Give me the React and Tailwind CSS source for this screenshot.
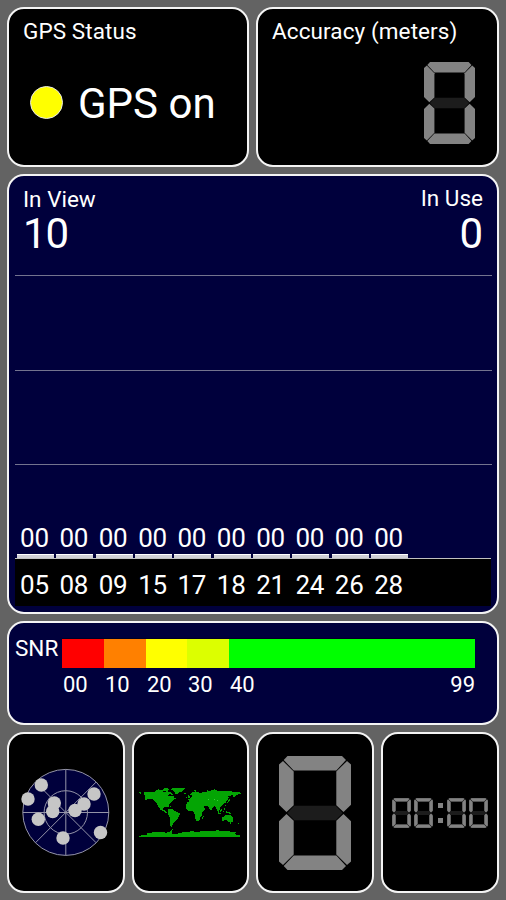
import React from 'react'
import clsx from 'clsx'

const satellites = ['05', '08', '09', '15', '17', '18', '21', '24', '26', '28']

const snrSteps = [
    { label: '00', color: 'bg-[#ff0000]', width: 'w-[42px]' },
    { label: '10', color: 'bg-[#ff8000]', width: 'w-[42px]' },
    { label: '20', color: 'bg-[#ffff00]', width: 'w-[41px]' },
    { label: '30', color: 'bg-[#dcff00]', width: 'w-[42px]' },
]

const radarDots = [
    [37.3, 55], [24, 69], [50.3, 73], [48.7, 81.5], [34.3, 89.3],
    [59, 108], [71, 80.5], [80, 74], [90, 64], [96.5, 102.5],
]

const Card = ({ className, children }) => (
    <div className={clsx('rounded-[17px] border-2 border-[#f4f4f4] overflow-hidden', className)}>
        {children}
    </div>
)

// Seven segment digit showing a dimmed zero
const Digit = ({ className }) => (
    <svg viewBox="0 0 72 114" preserveAspectRatio="none" className={className}>
        <g fill="#838383">
            <polygon points="8.5,0 63,0 67,4 57.3,14.5 14.7,14.5 4.7,4" />
            <polygon points="4,5 14.7,15.6 14.7,49.3 7.5,56 0,48.7 0,8.5" />
            <polygon points="68,5 57.3,15.6 57.3,49.3 64.5,56 72,48.7 72,8.5" />
            <polygon points="4,109 14.7,98.4 14.7,64.7 7.5,58 0,65.3 0,105.5" />
            <polygon points="68,109 57.3,98.4 57.3,64.7 64.5,58 72,65.3 72,105.5" />
            <polygon points="8.5,114 63,114 67,110 57.3,99.5 14.7,99.5 4.7,110" />
        </g>
        <polygon fill="#1c1c1c" points="8.3,57 15.3,49.7 56.7,49.7 63.7,57 56.7,64.3 15.3,64.3" />
    </svg>
)

const Radar = () => (
    <svg viewBox="2 4 114 157" className="w-[114px] h-[157px]">
        <g fill="none" stroke="#9494a8" strokeWidth="1">
            <circle cx="58.8" cy="82.4" r="43" fill="#00003c" />
            <circle cx="58.8" cy="82.4" r="21.7" />
            <path d="M15.8 82.5H102M58.8 39.4V125.4M28.4 52L89.2 112.8M89.2 52L28.4 112.8" />
        </g>
        <g fill="#c6c6c6">
            {radarDots.map(([x, y]) => (
                <circle key={`${x}-${y}`} cx={x - 3} cy={y} r="6.7" />
            ))}
        </g>
    </svg>
)

const WorldMap = () => (
    <svg viewBox="27 36 306 154" className="w-[102px] h-[51px]" fill="#04a504" shapeRendering="crispEdges">
        {/* North America */}
        <path d="M27 52l8 1-4 4zM40 52l12-2 22 2 14-2 14 3 6-4 8 6 4 2-6 5 8 2 6-2 5 6 5 3-9 5-7 6-5 8-2 8-6-3-9 3-2 5 5 3 4 4 7 5-3 1-9-5-12-7-8-12-4-10-7-7-10-4-12 3-8 3 4-7z" />
        <path d="M75 47l10-4 10 2 5 4-12 3-12-1zM98 43l12-2 8 2-8 5-10 1zM108 48l8 2 8 4 6 6-8-1-8-5-8-2zM101 40l15-1-8 4z" />
        {/* Greenland and Iceland */}
        <path d="M118 42l20-4 20 0 7 3-5 6-8 4-7 2-4 6-6-4-4-8-7-2zM161 55l6-1-1 4-5 0z" />
        {/* South America */}
        <path d="M109 92l10 1 7 3-10-2zM113 103l7-2 10 3 5 5 8 4 7 4-3 7-4 7-5 6-6 6-3 5-4 6 1 5-5-4-2-10 2-10-2-8-6-8-1-7 2-5z" />
        {/* Europe and Asia */}
        <path d="M178 79l-3-3 0-5 6 1 2-5 5-3-1-4-7 0 6-7 12-4 9 4 9 0 5-3 8 1 14-4 12-3 8 4 20 1 14 0 16 1 22 3-1 4-11 2-9 6-5 1 2-6-8 2-8 2 2 4-4 8-6 2 1 6-4 0-6 7-5 4-4 4 2 6-5 4-5-3-3-9-5-3-5 4-4 8-3 0-6-11-7-2-5 0-2 5-6 5-6-4-6-10-9 0-4-4-8 1-3-2-7-1z" />
        <path d="M174 60l5 3 1 5-6 0 1-4zM168 66l4-2 0 4-4 1zM190 45l9-1-2 3-6 0zM229 47l6-2-2 5zM249 42l8 0-3 3z" />
        {/* Japan */}
        <path d="M297 74l5-3-1 7-5 5-7 2 5-5zM298 66l3-2 0 5zM286 90l2 1-1 4z" />
        {/* Africa */}
        <path d="M170 84l16-2 7 2 8-1 10 2 5 9 5 6 5 0-3 6-6 8 0 8-5 5-2 6-6 6-5-2-4-10-1-8-4-9-7-1-8-1-6-6 0-9zM219 124l3-1-2 8-4 2z" />
        {/* Southeast Asia and Oceania */}
        <path d="M261 103l4 3 4 7-3 0zM270 106l6-4 1 6-5 4-3-3zM281 96l3 2 3 7-3-1zM266 115l12 2-1 2-11-1zM278 108l4 1-2 6zM288 109l12 4 6 5-9-2-8-3z" />
        <path d="M277 128l8-5 6-3 6 0 4 3 3-4 3 7 4 5-1 8-6 5-6-2-5-5-9 0-7 2zM301 145l4 0-2 3zM326 144l5-3-4 5-6 4z" />
        {/* Antarctica */}
        <path d="M27 183l22-3 2-5 18-2 22-1 18 2 10-3 3-5 6-2-3 6 0 6 6 3 8-1 14-4 16-3 16-1 22 1 12-3 14 1 12-1 20-1 18 2 15 1 20 2-1 7 13 2v5H27z" />
        <path fill="#35d535" d="M235 72h2v3h-2zM252 72h2v3h-2zM262 75h2v3h-2zM276 75h2v3h-2z" />
    </svg>
)

const clockDigit = 'w-[19px] h-[30px] [&_g]:stroke-black [&_g]:stroke-[1px]'

const App = () => {
    return (
        <div className="w-[506px] h-[900px] bg-[#636363] pt-[7px] pl-[7px] flex flex-col gap-[7px] text-white font-['Roboto','Liberation_Sans',sans-serif]">
            <div className="flex gap-[7px] h-[160px]">
                <Card className="w-[242px] bg-black pl-[14px] pt-[9px]">
                    <div className="text-[22.5px] leading-[27px] tracking-[0.1px]">GPS Status</div>
                    <div className="flex items-center mt-[34px] pl-[7px]">
                        <div className="w-[33px] h-[33px] mb-[4px] rounded-full bg-[#ffff00] border border-[#e8e8e8]" />
                        <div className="ml-[15px] text-[42px] leading-[50px]">GPS on</div>
                    </div>
                </Card>
                <Card className="w-[243px] bg-black pl-[14px] pt-[9px]">
                    <div className="text-[22.5px] leading-[27px] tracking-[0.1px]">Accuracy (meters)</div>
                    <Digit className="w-[51px] h-[82px] mt-[17px] ml-[152px]" />
                </Card>
            </div>

            <Card className="w-[492px] h-[440px] bg-[#00003c] pl-[6px] pr-[5px]">
                <div className="flex justify-between h-[99px] pl-[8px] pr-[9px] pt-[9px]">
                    <div>
                        <div className="text-[22.5px] leading-[28px]">In View</div>
                        <div className="text-[42px] leading-[42px] tracking-[-1px]">10</div>
                    </div>
                    <div className="text-right">
                        <div className="text-[22.5px] leading-[26px]">In Use</div>
                        <div className="text-[42px] leading-[46px]">0</div>
                    </div>
                </div>
                <div className="h-[95px] border-t border-[#73738f]" />
                <div className="h-[94px] border-t border-[#73738f]" />
                <div className="h-[94px] border-t border-[#73738f] flex items-end pl-[2px]">
                    {satellites.map((id) => (
                        <div key={id} className="w-[39.35px] shrink-0 pr-[2.5px]">
                            <div className="text-[26px] leading-[32px] tracking-[-0.3px] text-center pr-[2px]">00</div>
                            <div className="h-[4px] bg-[#d0d0d6] border-t border-white" />
                        </div>
                    ))}
                </div>
                <div className="h-[48px] mr-px bg-black border-t border-[#c0c0c0] flex pl-[2px] pt-[9px]">
                    {satellites.map((id) => (
                        <div key={id} className="w-[39.35px] shrink-0 pr-[4.5px] text-[26px] leading-[34px] tracking-[-0.3px] text-center">{id}</div>
                    ))}
                </div>
            </Card>

            <Card className="w-[492px] h-[104px] bg-[#00003c] flex pl-[6px] pt-[15px]">
                <div className="w-[47px] text-[22.5px] leading-[21px]">SNR</div>
                <div className="w-[413px]">
                    <div className="flex h-[30px] border-t border-black/40">
                        {snrSteps.map((step) => (
                            <div key={step.label} className={clsx(step.width, step.color)} />
                        ))}
                        <div className="flex-1 bg-[#00ff00]" />
                    </div>
                    <div className="flex text-[22px] leading-[26px] pt-[4px] pl-px">
                        {snrSteps.map((step) => (
                            <div key={step.label} className={step.width}>{step.label}</div>
                        ))}
                        <div className="flex-1 flex justify-between">
                            <span>40</span>
                            <span>99</span>
                        </div>
                    </div>
                </div>
            </Card>

            <div className="flex gap-[7px] h-[161px]">
                <Card className="w-[118px] bg-black">
                    <Radar />
                </Card>
                <Card className="w-[117px] bg-black pt-[53px] pl-[5px]">
                    <WorldMap />
                </Card>
                <Card className="w-[118px] bg-black pt-[22px] pl-[21px]">
                    <Digit className="w-[72px] h-[114px]" />
                </Card>
                <Card className="w-[118px] bg-black pt-[64px] pl-[9px]">
                    <div className="flex">
                        <Digit className={clockDigit} />
                        <Digit className={clsx(clockDigit, 'ml-[3px]')} />
                        <div className="w-[14px] h-[30px] flex flex-col items-center justify-center gap-[10px]">
                            <div className="w-[5px] h-[5px] bg-[#838383]" />
                            <div className="w-[5px] h-[5px] bg-[#838383]" />
                        </div>
                        <Digit className={clockDigit} />
                        <Digit className={clsx(clockDigit, 'ml-[3px]')} />
                    </div>
                </Card>
            </div>
        </div>
    )
}

export default App
